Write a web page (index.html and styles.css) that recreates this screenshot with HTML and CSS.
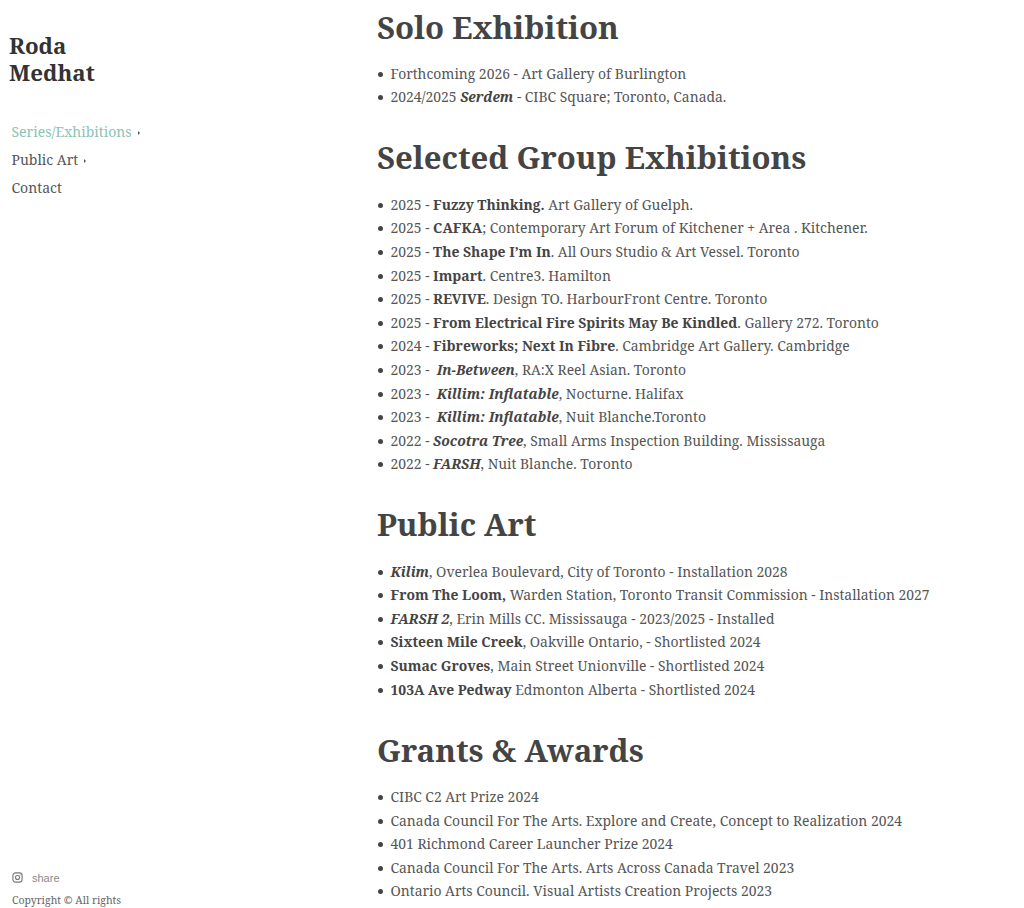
FILE: index.html

```html
<!DOCTYPE html>
<html lang="en">
<head>
	<meta charset="UTF-8">
	<title>Roda Medhat</title>
	<link rel="stylesheet" href="styles.css">
</head>
<body>
	<div id="sidebar">
		<h2 class="logo">Roda<br>Medhat</h2>
		<ul class="nav">
			<li class="active">Series/Exhibitions<span class="caret"></span></li>
			<li>Public Art<span class="caret"></span></li>
			<li>Contact</li>
		</ul>
		<div class="side-foot">
			<div class="social">
				<svg class="insta" viewBox="0 0 12 12" width="11" height="11">
					<rect x="1" y="1" width="10" height="10" rx="2.8" fill="none" stroke="#777" stroke-width="1.2"/>
					<circle cx="6" cy="6" r="2.2" fill="none" stroke="#777" stroke-width="1.2"/>
					<circle cx="8.8" cy="3.2" r=".6" fill="#777"/>
				</svg>
				<span class="share">share</span>
			</div>
			<div class="copy">Copyright © All rights</div>
		</div>
	</div>
	<div id="content">
		<h1>Solo Exhibition</h1>
		<ul>
			<li>Forthcoming 2026 - Art Gallery of Burlington</li>
			<li>2024/2025 <b><i>Serdem</i></b> - CIBC Square; Toronto, Canada.</li>
		</ul>
		<h1>Selected Group Exhibitions</h1>
		<ul>
			<li>2025 - <b>Fuzzy Thinking.</b> Art Gallery of Guelph.</li>
			<li>2025 - <b>CAFKA</b>; Contemporary Art Forum of Kitchener + Area . Kitchener.</li>
			<li>2025 - <b>The Shape I’m In</b>. All Ours Studio &amp; Art Vessel. Toronto</li>
			<li>2025 - <b>Impart</b>. Centre3. Hamilton</li>
			<li>2025 - <b>REVIVE</b>. Design TO. HarbourFront Centre. Toronto</li>
			<li>2025 - <b>From Electrical Fire Spirits May Be Kindled</b>. Gallery 272. Toronto</li>
			<li>2024 - <b>Fibreworks; Next In Fibre</b>. Cambridge Art Gallery. Cambridge</li>
			<li>2023 - &nbsp;<b><i>In-Between</i></b>, RA:X Reel Asian. Toronto</li>
			<li>2023 - &nbsp;<b><i>Killim: Inflatable</i></b>, Nocturne. Halifax</li>
			<li>2023 - &nbsp;<b><i>Killim: Inflatable</i></b>, Nuit Blanche.Toronto</li>
			<li>2022 - <b><i>Socotra Tree</i></b>, Small Arms Inspection Building. Mississauga</li>
			<li>2022 - <b><i>FARSH</i></b>, Nuit Blanche. Toronto</li>
		</ul>
		<h1>Public Art</h1>
		<ul>
			<li><b><i>Kilim</i></b>, Overlea Boulevard, City of Toronto - Installation 2028</li>
			<li><b>From The Loom,</b> Warden Station, Toronto Transit Commission - Installation 2027</li>
			<li><b><i>FARSH 2</i></b>, Erin Mills CC. Mississauga - 2023/2025 - Installed</li>
			<li><b>Sixteen Mile Creek</b>, Oakville Ontario, - Shortlisted 2024</li>
			<li><b>Sumac Groves</b>, Main Street Unionville - Shortlisted 2024</li>
			<li><b>103A Ave Pedway</b> Edmonton Alberta - Shortlisted 2024</li>
		</ul>
		<h1>Grants &amp; Awards</h1>
		<ul>
			<li>CIBC C2 Art Prize 2024</li>
			<li>Canada Council For The Arts. Explore and Create, Concept to Realization 2024</li>
			<li>401 Richmond Career Launcher Prize 2024</li>
			<li>Canada Council For The Arts. Arts Across Canada Travel 2023</li>
			<li>Ontario Arts Council. Visual Artists Creation Projects 2023</li>
		</ul>
	</div>
</body>
</html>
```

FILE: styles.css

```css
* {
	padding:0;
	margin:0;
	box-sizing:border-box;
}
html, body {
	height:908px;
	overflow:hidden;
}
body {
	display:flex;
	font-family:"Noto Serif", "Droid Serif", "DejaVu Serif", serif;
	font-size:13.9px;
	color:#555;
	background:#fff;
}
#sidebar {
	width:377px;
	height:908px;
	flex:none;
	display:flex;
	flex-direction:column;
	padding:32px 0 0 9px;
}
.logo {
	font-size:22.3px;
	line-height:27px;
	font-weight:700;
	color:#333;
}
.nav {
	list-style:none;
	margin-top:32px;
	padding-left:2.5px;
}
.nav li {
	height:28px;
	line-height:28px;
	font-size:14px;
}
.nav .active {
	color:#8cc3b5;
}
.caret {
	display:inline-block;
	margin-left:6px;
	vertical-align:2px;
	border-left:2px solid #555;
	border-top:2px solid transparent;
	border-bottom:2px solid transparent;
}
.side-foot {
	margin-top:auto;
	padding:0 0 0 3px;
	height:39px;
}
.social {
	display:flex;
	align-items:center;
	height:17px;
}
.share {
	margin-left:9px;
	font-family:"Liberation Sans", sans-serif;
	font-size:11px;
	color:#888;
}
.copy {
	margin-top:7px;
	font-size:10.5px;
	line-height:15px;
	color:#666;
}
#content {
	flex:1;
	margin-top:5.5px;
}
#content h1 {
	font-size:31.1px;
	line-height:43px;
	font-weight:700;
	color:#444;
	margin-bottom:13.3px;
}
#content ul {
	list-style:none;
	margin-bottom:27.5px;
}
#content li {
	line-height:23.6px;
}
#content li::before {
	content:"";
	display:inline-block;
	width:5px;
	height:5px;
	margin:0 7.5px 2px 1px;
	border-radius:50%;
	background:#444;
}
#content b {
	color:#444;
}
```
